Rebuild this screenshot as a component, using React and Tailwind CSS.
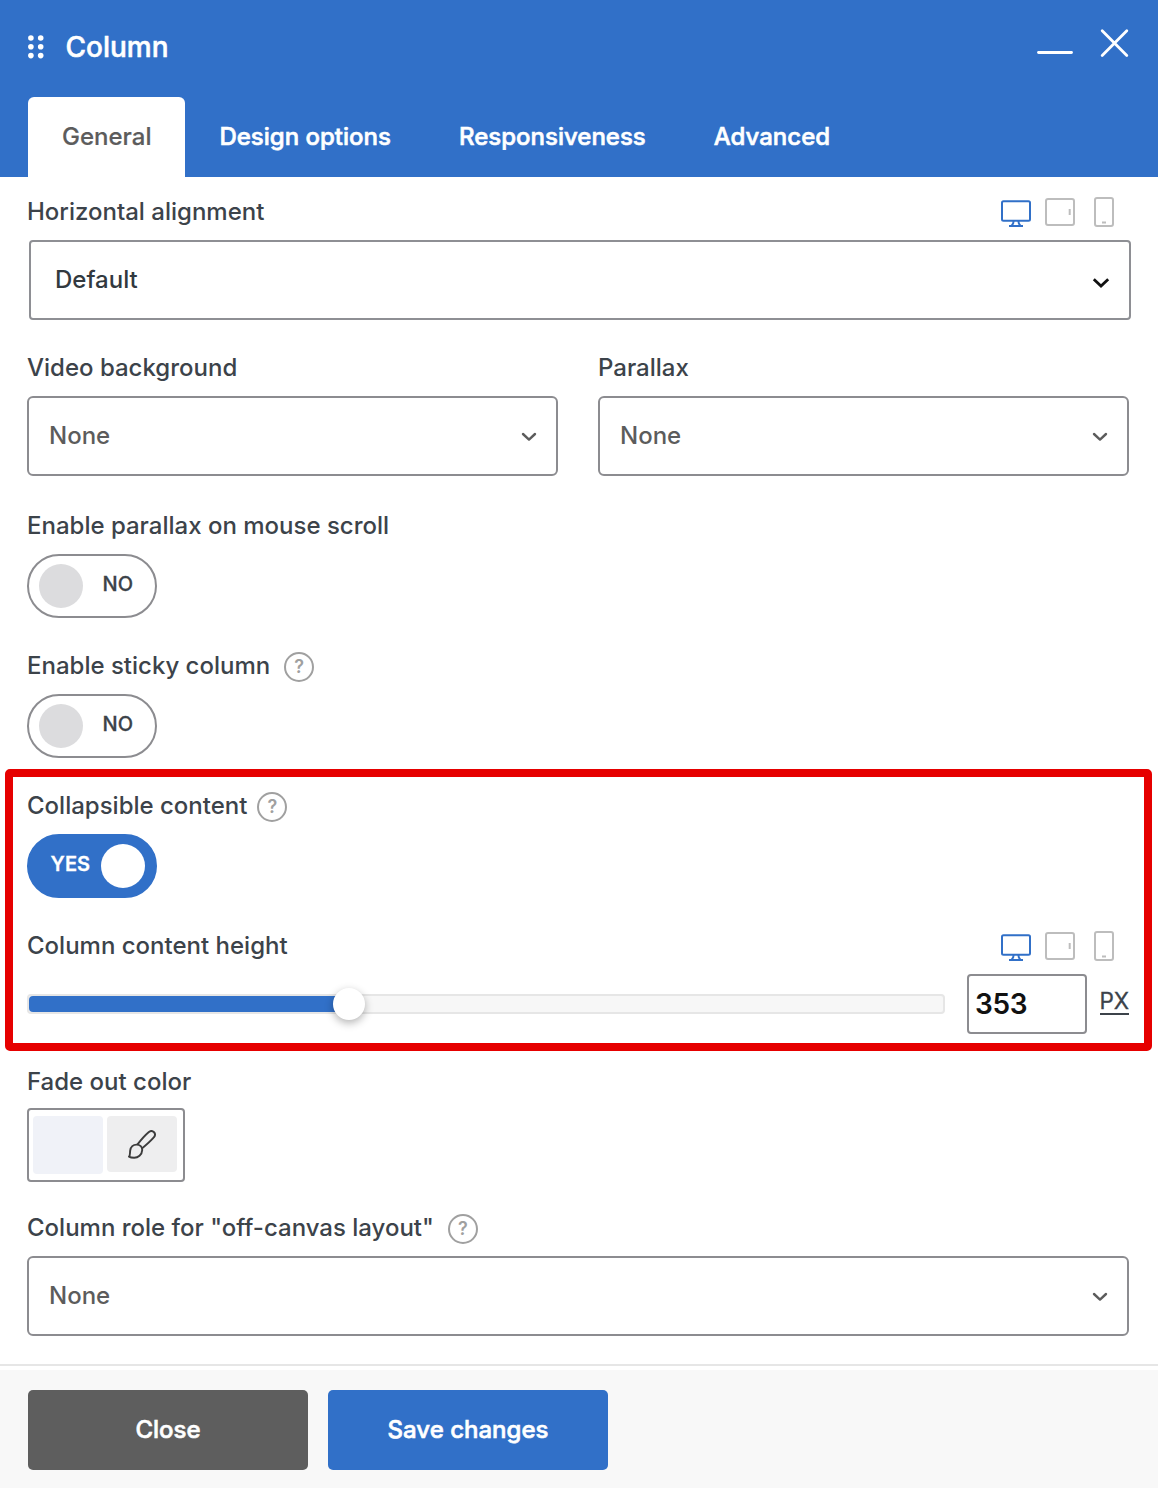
import { useState } from 'react'

const tabs = ['General', 'Design options', 'Responsiveness', 'Advanced']

function Chevron({ className }) {
    return (
        <svg viewBox="0 0 18 12" className={`w-[18px] h-3 ${className}`} fill="none" stroke="currentColor" strokeWidth="2.4" strokeLinecap="round" strokeLinejoin="round">
            <path d="M3 3l6 5.6L15 3" />
        </svg>
    )
}

function Help() {
    return (
        <span className="mt-[2px] flex size-[30px] items-center justify-center rounded-full border-2 border-[#a0a0a0] text-[18px] leading-none font-semibold text-[#a0a0a0]">?</span>
    )
}

function Devices() {
    return (
        <div className="mr-[17px] flex items-center">
            <svg viewBox="0 0 30 32" className="h-8 w-[30px] text-[#3170c8]" fill="none" stroke="currentColor" strokeWidth="2">
                <rect x="1" y="5.3" width="28" height="19.5" rx="1.5" />
                <path d="M12.6 25c0 2-.6 3.6-2 4.5M17.4 25c0 2 .6 3.6 2 4.5M8 30h14" />
            </svg>
            <svg viewBox="0 0 30 32" className="ml-[14px] h-8 w-[30px] text-[#bdbdbd]" fill="none" stroke="currentColor" strokeWidth="2">
                <rect x="1" y="3" width="28" height="26" rx="2" />
                <path d="M24.7 13v6" />
            </svg>
            <svg viewBox="0 0 20 32" className="ml-[19px] h-8 w-5 text-[#bdbdbd]" fill="none" stroke="currentColor" strokeWidth="2">
                <rect x="1" y="2" width="18" height="28" rx="2" />
                <path d="M8 26.5h4" />
            </svg>
        </div>
    )
}

function Label({ children, help, devices, gap = 'gap-[14px]' }) {
    return (
        <div className="flex h-8 items-center justify-between">
            <div className={`flex items-center ${gap}`}>
                <span className="text-[24px] leading-8 font-medium text-[#3c434a]">{children}</span>
                {help && <Help />}
            </div>
            {devices && <Devices />}
        </div>
    )
}

function Select({ value }) {
    return (
        <button className="mt-3 flex h-20 w-full items-center justify-between rounded-[6px] border-2 border-[#8c8c90] bg-white pr-[18px] pl-5 text-[24px] font-medium text-[#5c5c5c]">
            <span className="leading-8">{value}</span>
            <Chevron className="mt-[2px]" />
        </button>
    )
}

function Toggle({ on, onChange }) {
    return (
        <button
            onClick={onChange}
            className={`mt-3 flex h-16 w-[130px] items-center rounded-full border-2 px-[10px] text-[20px] [-webkit-text-stroke:0.3px_currentColor] ${on ? 'flex-row-reverse border-[#3170c8] bg-[#3170c8] font-semibold text-white' : 'border-[#8c8c90] bg-white font-medium text-[#3c434a]'}`}
        >
            <span className={`size-11 rounded-full ${on ? 'bg-white' : 'bg-[#dcdcde]'}`} />
            <span className={`relative -top-[2px] ${on ? 'mr-[11px]' : 'ml-[19.5px]'}`}>{on ? 'YES' : 'NO'}</span>
        </button>
    )
}

export default function App() {
    const [activeTab, setActiveTab] = useState('General')
    const [parallax, setParallax] = useState(false)
    const [sticky, setSticky] = useState(false)
    const [collapsible, setCollapsible] = useState(true)

    return (
        <div className="flex h-[1488px] w-[1158px] flex-col overflow-hidden bg-white font-['Inter',sans-serif]">
            <header className="flex h-[177px] flex-col justify-between bg-[#3170c8] px-7 text-white">
                <div className="flex h-[94px] items-center">
                    <svg viewBox="0 0 16 24" className="h-6 w-4" fill="currentColor">
                        {[3, 11.8, 20.6].map(y => (
                            <g key={y}>
                                <circle cx="2.9" cy={y} r="2.8" />
                                <circle cx="12.7" cy={y} r="2.8" />
                            </g>
                        ))}
                    </svg>
                    <h1 className="ml-[21.5px] text-[28px] leading-8 font-medium [-webkit-text-stroke:0.5px_currentColor]">Column</h1>
                    <div className="-mt-2 ml-auto flex items-center">
                        <svg viewBox="0 0 36 30" className="h-[30px] w-9" stroke="currentColor" strokeWidth="2.8" strokeLinecap="round">
                            <path d="M1.5 24.5h33" />
                        </svg>
                        <svg viewBox="0 0 30 30" className="mr-px ml-[26px] size-[30px]" stroke="currentColor" strokeWidth="2.8" strokeLinecap="round">
                            <path d="M3.2 2.8l24.6 24.6M27.8 2.8l-24.6 24.6" />
                        </svg>
                    </div>
                </div>
                <nav className="flex h-20">
                    {tabs.map(tab => (
                        <button
                            key={tab}
                            onClick={() => setActiveTab(tab)}
                            className={`rounded-t-[6px] px-[34px] text-[24px] font-medium ${tab === activeTab ? 'bg-white text-[#5c5c5c] [-webkit-text-stroke:0.2px_currentColor]' : 'text-white [-webkit-text-stroke:0.6px_currentColor]'}`}
                        >
                            {tab}
                        </button>
                    ))}
                </nav>
            </header>

            <main className="flex flex-col px-[27px] pt-[19px]">
                <Label devices>Horizontal alignment</Label>
                <button className="mt-3 ml-[2px] flex h-20 w-[1102px] items-center justify-between rounded-[4px] border-2 border-[#8e8f94] bg-white pr-[19px] pl-6 text-[24px] font-medium text-[#32393f]">
                    <span>Default</span>
                    <svg viewBox="0 0 18 12" className="mt-[5px] h-3 w-[18px]" fill="none" stroke="#111" strokeWidth="2.8">
                        <path d="M1.8 2.2L9 9l7.2-6.800" />
                    </svg>
                </button>

                <div className="mt-8 grid w-[1102px] grid-cols-2 gap-10">
                    <div>
                        <Label>Video background</Label>
                        <Select value="None" />
                    </div>
                    <div>
                        <Label>Parallax</Label>
                        <Select value="None" />
                    </div>
                </div>

                <div className="mt-[34px]">
                    <Label>Enable parallax on mouse scroll</Label>
                    <Toggle on={parallax} onChange={() => setParallax(!parallax)} />
                </div>

                <div className="mt-8">
                    <Label help>Enable sticky column</Label>
                    <Toggle on={sticky} onChange={() => setSticky(!sticky)} />
                </div>

                {/* Highlighted settings */}
                <section className="mt-[11px] -ml-[22px] h-[282px] w-[1147px] rounded-[5px] border-8 border-[#e60000] pt-[13px] pr-[13px] pl-[14px]">
                    <Label help gap="gap-[10px]">Collapsible content</Label>
                    <Toggle on={collapsible} onChange={() => setCollapsible(!collapsible)} />
                    <div className="mt-8">
                        <Label devices>Column content height</Label>
                        <div className="mt-3 flex h-[60px] items-center">
                            <div className="relative h-5 w-[918px] rounded-[4px] border-2 border-[#e6e6e6] bg-[#f7f7f7]">
                                <div className="h-4 w-[320px] rounded-[4px] bg-[#3170c8]" />
                                <div className="absolute -top-2 left-[304px] size-8 rounded-full bg-white shadow-[0_3px_8px_rgba(0,0,0,0.3)]" />
                            </div>
                            <div className="ml-[22px] flex h-[60px] w-[120px] items-center rounded-[4px] border-2 border-[#8c8c90] pl-[6px] text-[28px] font-semibold tracking-[-0.01em] text-[#111]">353</div>
                            <span className="-mt-[5px] ml-[12.5px] border-b-2 border-[#3c434a] text-[22.5px] leading-6 text-[#3c434a] [-webkit-text-stroke:0.3px_currentColor]">PX</span>
                        </div>
                    </div>
                </section>

                <div className="mt-[15px]">
                    <Label>Fade out color</Label>
                    <div className="mt-[10px] flex h-[74px] w-[158px] gap-1 rounded-[4px] border-2 border-[#8c8c90] px-1 pt-[6px]">
                        <div className="h-[58px] w-[70px] rounded-[4px] bg-[#f0f2f8]" />
                        <div className="flex h-14 w-[70px] items-center justify-center rounded-[4px] bg-[#eeeeef]">
                            <svg viewBox="0 0 28 29" className="h-[29px] w-7" fill="none" stroke="#3c3c3c" strokeWidth="1.9" strokeLinejoin="round">
                                <path d="M9.3 14.6C12.5 10.5 17 5.2 20.600 2.200c1.800-1.500 3.800-1.500 5.200-.2 1.500 1.400 1.500 3.400.2 5.200C23 10.700 18 15.200 13.600 18.700" />
                                <path d="M1 26.6c1.4-1.3.8-3.7 1.2-6.1.6-3.8 3.3-5.9 6.5-5.900 3.300 0 5.700 2.300 5.500 5.500-.3 5-4.200 7.700-8 7.700-2.200 0-4-.4-5.200-1.200z" />
                            </svg>
                        </div>
                    </div>
                </div>

                <div className="mt-[30px] w-[1102px]">
                    <Label help>Column role for "off-canvas layout"</Label>
                    <Select value="None" />
                </div>
            </main>

            <footer className="mt-7 border-t-2 border-[#e6e6e6] pt-1">
                <div className="flex h-[118px] gap-5 bg-[#f8f8f8] px-7 pt-5 text-[24px] font-medium text-white [-webkit-text-stroke:0.6px_currentColor]">
                    <button className="h-20 w-[280px] rounded-[5px] bg-[#5e5e5e]">Close</button>
                    <button className="h-20 w-[280px] rounded-[5px] bg-[#3170c8]">Save changes</button>
                </div>
            </footer>
        </div>
    )
}
